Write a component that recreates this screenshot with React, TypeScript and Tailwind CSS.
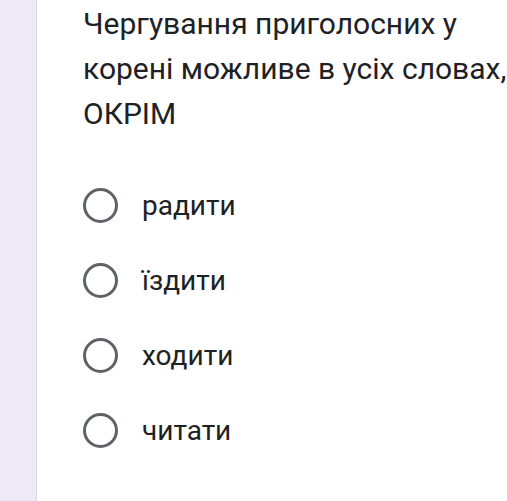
const options = ["радити", "їздити", "ходити", "читати"]

export default function App() {
  return (
    <div className="flex h-[501px] w-[507px] overflow-hidden bg-white font-['Roboto',sans-serif] text-[#202124]">
      <div className="h-full w-[37px] shrink-0 border-r border-[#dcd9e6] bg-[#ede9f7]" />

      <div className="flex-1 pl-[46px] pt-[1px]">
        <p className="whitespace-nowrap text-[30px] leading-[45px]">
          Чергування приголосних у
          <br />
          корені можливе в усіх словах,
          <br />
          ОКРІМ
        </p>

        <div className="mt-[32px] flex flex-col">
          {options.map((o) => (
            <label key={o} className="flex h-[75px] items-center gap-[24px]">
              <span className="h-[35px] w-[35px] shrink-0 rounded-full border-[3px] border-[#5f6368]" />
              <span className="text-[28px] leading-none">{o}</span>
            </label>
          ))}
        </div>
      </div>
    </div>
  )
}
